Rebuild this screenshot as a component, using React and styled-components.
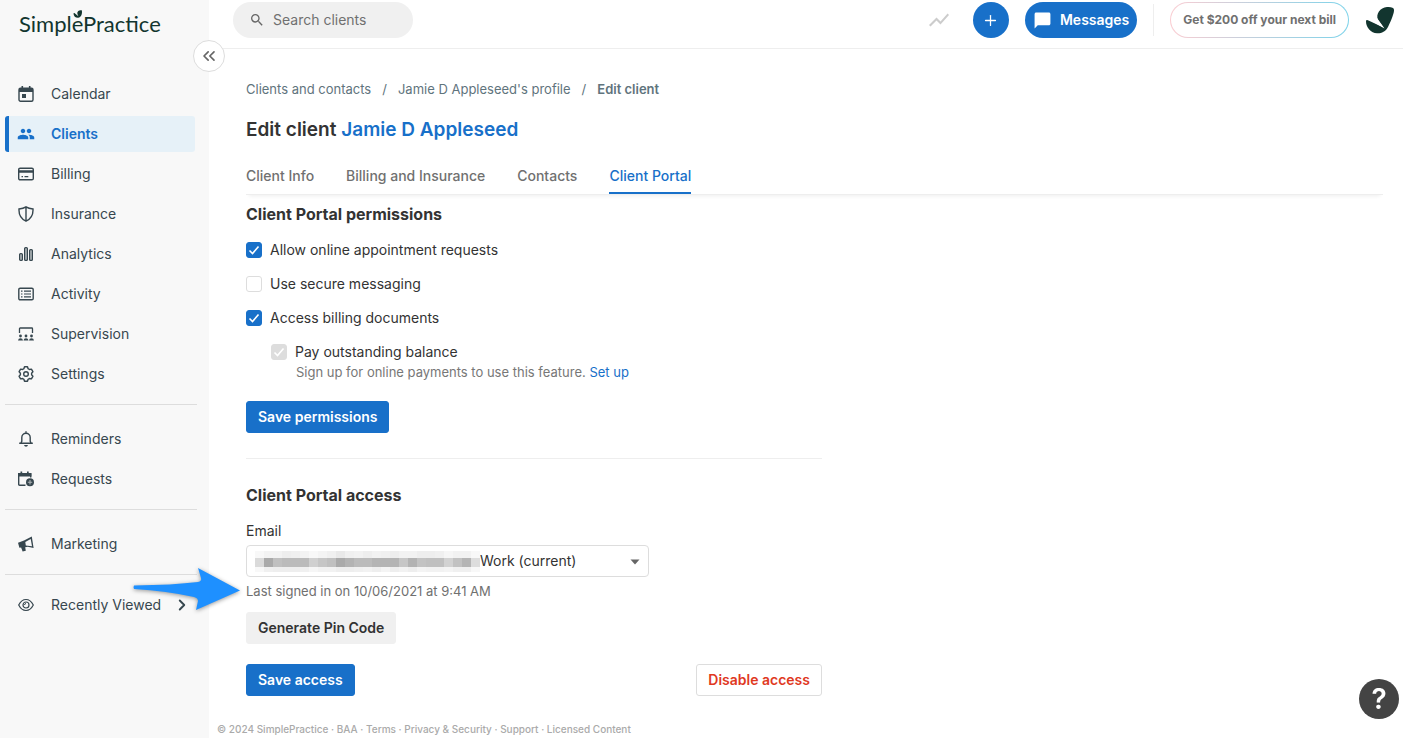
import React from "react";
import styled, { createGlobalStyle } from "styled-components";
import { MdSearch, MdPeople, MdChatBubble, MdShowChart } from "react-icons/md";
import { LuChevronsLeft, LuChevronRight, LuPlus } from "react-icons/lu";

const BLUE = "#1870c9";

const MOSAIC = [
  "f8f8f8 f3f3f3 f3f3f3 eee f0f0f0 f3f3f3 f8f8f8 f4f4f4 f0f0f0 e9e9e9 f0f0f0 f2f2f2 eee f2f2f2 f0f0f0 eee f2f2f2 f2f2f2 eee eee f0f0f0 f6f6f6 f2f2f2 f2f2f2 f8f8f8",
  "dadada aaa c0c0c0 bbb bbb bbb d0d0d0 c6c6c6 c0c0c0 aaa b3b3b3 bbb bbb b4b4b4 b4b4b4 b4b4b4 c6c6c6 b3b3b3 c3c3c3 c0c0c0 c0c0c0 d2d2d2 c2c2c2 b5b5b5 ddd",
  "f8f8f8 f0f0f0 eee eee eee f0f0f0 f6f6f6 f2f2f2 f2f2f2 eee eee f0f0f0 f2f2f2 eee f4f4f4 eee f2f2f2 eee f4f4f4 f2f2f2 f2f2f2 f4f4f4 f0f0f0 f0f0f0 f8f8f8",
].map((row) => row.split(" "));

const CalendarIcon = () => (
  <svg width="16" height="16" viewBox="0 0 16 16" fill="none">
    <rect x="1" y="2.2" width="14" height="13" rx="1.5" stroke="currentColor" strokeWidth="1.4" />
    <path d="M1 2h14v4H1zM3.5 0h1.6v3H3.5zM10.9 0h1.6v3h-1.6zM4 8h4v4H4z" fill="currentColor" />
  </svg>
);

const BillingIcon = () => (
  <svg width="16" height="14" viewBox="0 0 16 14" fill="none">
    <rect x=".7" y="1.2" width="14.6" height="11.6" rx="1.4" stroke="currentColor" strokeWidth="1.4" />
    <path d="M1 3.3h14v2.4H1zM3.5 9H5v1.3H3.5zM6.500 9h3.800v1.300H6.500z" fill="currentColor" />
  </svg>
);

const ShieldIcon = () => (
  <svg width="16" height="16" viewBox="0 0 16 16" fill="none" stroke="currentColor" strokeWidth="1.4">
    <path d="M8 .8c2 1.300 4.200 1.900 7 2.200.3 5.700-1.900 9.900-7 12.200C2.900 12.900.7 8.700 1 3 3.800 2.700 6 2.100 8 .8zM8 1v14" />
  </svg>
);

const AnalyticsIcon = () => (
  <svg width="16" height="16" viewBox="0 0 16 16" stroke="currentColor" strokeWidth="1.2" fill="#b3b9bb">
    <rect x="1.6" y="7.6" width="2.8" height="6.8" rx="1" />
    <rect x="6.6" y="1.6" width="2.8" height="12.8" rx="1" />
    <rect x="11.6" y="3.6" width="2.8" height="10.8" rx="1" />
  </svg>
);

const ActivityIcon = () => (
  <svg width="16" height="14" viewBox="0 0 16 14" fill="none" stroke="currentColor" strokeWidth="1.4">
    <rect x=".8" y="1.2" width="14.4" height="11.6" rx="1.3" />
    <path d="M3 4.200h1.500M3 7h1.500M3 9.800h1.500M6 4.200h7M6 7h7M6 9.800h7" strokeWidth="1.2" />
  </svg>
);

const SupervisionIcon = () => (
  <svg width="16" height="14" viewBox="0 0 16 14" fill="currentColor">
    <path d="M1.500 6V1.700Q1.500 1 2.200 1h11.600q.7 0 .7.700V6" fill="none" stroke="currentColor" strokeWidth="1.3" />
    <circle cx="2.500" cy="9" r="1.4" />
    <circle cx="8" cy="9" r="1.4" />
    <circle cx="13.500" cy="9" r="1.4" />
    <path d="M0 13.500q.3-2.300 2.500-2.300T5 13.500zM5.500 13.500q.3-2.300 2.500-2.300t2.500 2.300zM11 13.500q.3-2.300 2.500-2.300t2.500 2.300z" />
  </svg>
);

const GearIcon = () => (
  <svg width="16" height="16" viewBox="0 0 16 16" fill="none" stroke="currentColor" strokeWidth="1.4" strokeLinejoin="round">
    <path d="M6.500.8h3l.6 1.900 1.300.8 2-.4 1.500 2.600L13.600 7.200v1.600l1.300 1.500-1.500 2.600-2-.4-1.300.8-.6 1.900h-3l-.6-1.900-1.300-.8-2 .4-1.500-2.600 1.300-1.500V7.200L1.100 5.700l1.500-2.600 2 .4 1.300-.8z" />
    <circle cx="8" cy="8" r="2.3" />
  </svg>
);

const BellIcon = () => (
  <svg width="16" height="16" viewBox="0 0 16 16" fill="none" stroke="currentColor" strokeWidth="1.4">
    <path d="M1.200 12.300h13.600M2.800 12.300l1-2V6.500a4.200 4.200 0 0 1 8.400 0v3.800l1 2M8 .3v1.800" />
    <path d="M6 14h4q-.4 1.700-2 1.700T6 14z" fill="currentColor" stroke="none" />
  </svg>
);

const RequestsIcon = () => (
  <svg width="16" height="16" viewBox="0 0 16 16" fill="none">
    <path d="M7.500 14.300H1.700q-1 0-1-1V3h12v3.500" stroke="currentColor" strokeWidth="1.4" />
    <path d="M0 2h13.400v3.500H0zM2.500.5h1.700v2H2.500zM9 .5h1.700v2H9z" fill="currentColor" />
    <circle cx="12" cy="11.2" r="4" fill="currentColor" />
    <path d="M12 9v4.400M9.800 11.200h4.400" stroke="#aeb4b6" strokeWidth="1.1" />
  </svg>
);

const MarketingIcon = () => (
  <svg width="16" height="16" viewBox="0 0 16 16">
    <path d="M13.800.5 15.600 12l-5.800-1.300-2.600.5.600 3.500-3.200.7-1.500-3.800-1.700.2L0 6.800l6-2.200zM12.700 3 7.300 6l.5 3.500 6.200.8z" fill="currentColor" fillRule="evenodd" />
  </svg>
);

const EyeIcon = () => (
  <svg width="16" height="14" viewBox="0 0 16 14" fill="none" stroke="currentColor" strokeWidth="1.2">
    <path d="M.7 7Q3.500 1.500 8 1.500T15.300 7Q12.500 12.500 8 12.500T.7 7z" />
    <circle cx="8" cy="7" r="3" />
    <path d="M6.500 7Q6.500 5.500 8 5.500" strokeWidth="1" />
  </svg>
);

const Leaf = () => (
  <svg width="30" height="28" viewBox="0 0 30 28" fill="#12352f">
    <path d="M18.500 21.500 13 14C10.500 8 15 1.500 22 1c4-.3 7 .5 7 2.800.3 3-2.500 10-6 17.200-2.500 5-7 6.500-11 6.200C6 27 1 21.500 1 15.500c.2-2.200 1.500-1.600 3-.7z" />
    <path d="m5 14 14.500 8.500L12 12z" fill="#fff" />
  </svg>
);

const Sprout = () => (
  <svg width="10" height="9" viewBox="0 0 10 9" fill="#12352f">
    <path d="M4.500 4.200C3.800 1.800 5.500.2 8.800.3c.7 3-.3 7-3.600 7.500C2.500 8 .7 6 .5 3.700c0-1 .8-.8 1.200-.5l3.700 3z" />
  </svg>
);

const mainLinks = [
  { label: "Calendar", icon: <CalendarIcon /> },
  { label: "Clients", icon: <MdPeople size={18} />, active: true },
  { label: "Billing", icon: <BillingIcon /> },
  { label: "Insurance", icon: <ShieldIcon /> },
  { label: "Analytics", icon: <AnalyticsIcon /> },
  { label: "Activity", icon: <ActivityIcon /> },
  { label: "Supervision", icon: <SupervisionIcon /> },
  { label: "Settings", icon: <GearIcon /> },
];

const noticeLinks = [
  { label: "Reminders", icon: <BellIcon /> },
  { label: "Requests", icon: <RequestsIcon /> },
];

const footerLinks = ["BAA", "Terms", "Privacy & Security", "Support", "Licensed Content"];

const NavGroup = ({ links }) => (
  <Nav>
    {links.map(({ label, icon, active }) => (
      <NavItem href="#" key={label} $active={active}>
        <NavIcon>{icon}</NavIcon>
        {label}
      </NavItem>
    ))}
  </Nav>
);

const App = () => {
  return (
    <Page>
      <GlobalStyle />
      <Sidebar>
        <Logo href="#">
          SimplePractice
          <LogoLeaf>
            <Sprout />
          </LogoLeaf>
        </Logo>
        <Collapse aria-label="Collapse menu">
          <LuChevronsLeft size={20} />
        </Collapse>
        <NavGroup links={mainLinks} />
        <Rule />
        <NavGroup links={noticeLinks} />
        <Rule />
        <NavGroup links={[{ label: "Marketing", icon: <MarketingIcon /> }]} />
        <Rule />
        <Recent>
          <NavIcon>
            <EyeIcon />
          </NavIcon>
          Recently Viewed
          <RecentChevron size={18} strokeWidth={2.5} />
        </Recent>
      </Sidebar>

      <Main>
        <Header>
          <Search>
            <MdSearch size={16} />
            <SearchInput aria-label="Search clients" placeholder="Search clients" />
          </Search>
          <HeaderActions>
            <ChartButton aria-label="Activity trends">
              <MdShowChart size={24} />
            </ChartButton>
            <AddButton aria-label="Add">
              <LuPlus size={17} strokeWidth={1.8} />
            </AddButton>
            <Messages>
              <MdChatBubble size={19} />
              Messages
            </Messages>
            <Divider />
            <Offer>Get $200 off your next bill</Offer>
            <Profile aria-label="Account">
              <Leaf />
            </Profile>
          </HeaderActions>
        </Header>

        <Content>
          <Breadcrumbs aria-label="Breadcrumb">
            <a href="#">Clients and contacts</a>
            <span>/</span>
            <a href="#">Jamie D Appleseed's profile</a>
            <span>/</span>
            <b>Edit client</b>
          </Breadcrumbs>
          <Title>
            Edit client <a href="#">Jamie D Appleseed</a>
          </Title>
          <Tabs>
            <Tab href="#">Client Info</Tab>
            <Tab href="#">Billing and Insurance</Tab>
            <Tab href="#">Contacts</Tab>
            <Tab href="#" $active>
              Client Portal
            </Tab>
          </Tabs>

          <Permissions>
            <SectionTitle>Client Portal permissions</SectionTitle>
            <CheckRow>
              <Checkbox defaultChecked />
              Allow online appointment requests
            </CheckRow>
            <CheckRow>
              <Checkbox />
              Use secure messaging
            </CheckRow>
            <CheckRow>
              <Checkbox defaultChecked />
              Access billing documents
            </CheckRow>
            <SubOption>
              <CheckRow>
                <Checkbox defaultChecked disabled />
                Pay outstanding balance
              </CheckRow>
              <Hint>
                Sign up for online payments to use this feature. <a href="#">Set up</a>
              </Hint>
            </SubOption>
            <Button>Save permissions</Button>
          </Permissions>

          <Access>
            <SectionTitle>Client Portal access</SectionTitle>
            <Label htmlFor="email">Email</Label>
            <SelectBox>
              <Select id="email">
                <option>Work (current)</option>
              </Select>
              <Mosaic width="225" height="21" viewBox="0 0 225 21" aria-hidden="true">
                {MOSAIC.map((row, y) =>
                  row.map((color, x) => (
                    <rect key={`${x}-${y}`} x={x * 9} y={[0, 7, 16][y]} width="9" height={[7, 9, 5][y]} fill={`#${color}`} />
                  ))
                )}
              </Mosaic>
              <Caret width="10" height="6" viewBox="0 0 10 6">
                <path d="M.5.5h9L5 5.500z" fill="#666" />
              </Caret>
              <Arrow width="108" height="46" viewBox="0 0 108 46">
                <path d="M1 18.500Q0 20 1 22q33 2 60 8 4 1 4 4l-2 9 44-19.500L65 1l3 10q1 3-3 4-25 3-64 3.500z" fill="#1e90ff" />
              </Arrow>
            </SelectBox>
            <SignedIn>Last signed in on 10/06/2021 at 9:41 AM</SignedIn>
            <Button $kind="grey">Generate Pin Code</Button>
            <Actions>
              <Button>Save access</Button>
              <Button $kind="danger">Disable access</Button>
            </Actions>
          </Access>
        </Content>

        <Footer>
          © 2024 SimplePractice
          {footerLinks.map((link) => (
            <React.Fragment key={link}>
              {" · "}
              <a href="#">{link}</a>
            </React.Fragment>
          ))}
        </Footer>
      </Main>

      <Help aria-label="Help">?</Help>
    </Page>
  );
};

export default App;

const Checkbox = (props) => (
  <CheckHolder>
    <CheckInput type="checkbox" {...props} />
    <svg width="16" height="16" viewBox="0 0 16 16" fill="none" stroke="#fff" strokeWidth="1.6">
      <path d="m3.500 8.500 3 3L12.500 4.500" />
    </svg>
  </CheckHolder>
);

const GlobalStyle = createGlobalStyle`
  * {
    box-sizing: border-box;
  }

  body {
    margin: 0;
    background: #fff;
    color: #333;
    font-family: Inter, "Liberation Sans", sans-serif;
    font-size: 14px;
    line-height: 20px;
  }

  a {
    color: inherit;
    text-decoration: none;
  }

  button, input, select {
    font-family: inherit;
    font-size: inherit;
    line-height: inherit;
  }

  button {
    cursor: pointer;
  }

  svg {
    display: block;
    flex: none;
  }
`;

const Page = styled.div`
  display: flex;
  min-height: 100vh;
`;

const Sidebar = styled.aside`
  position: relative;
  flex: none;
  width: 209px;
  padding: 8px 12px 0 5px;
  background: #f8f8f8;
  color: #37474f;
`;

const Logo = styled.a`
  position: relative;
  display: block;
  width: max-content;
  margin: 0 0 36px 14px;
  color: #12352f;
  font-family: Lato, sans-serif;
  font-size: 22px;
  line-height: 32px;
`;

const LogoLeaf = styled.span`
  position: absolute;
  top: 2px;
  left: 54px;
`;

const Collapse = styled.button`
  position: absolute;
  top: 40px;
  right: -16px;
  display: flex;
  align-items: center;
  justify-content: center;
  width: 32px;
  height: 32px;
  padding: 0;
  border: 1px solid #ddd;
  border-radius: 50%;
  background: #fff;
  color: #666;
`;

const Nav = styled.nav`
  display: flex;
  flex-direction: column;
  gap: 4px;
`;

const NavItem = styled.a`
  display: flex;
  align-items: center;
  height: 36px;
  margin-right: 2px;
  padding-left: 9px;
  border-left: 4px solid ${(p) => (p.$active ? BLUE : "transparent")};
  border-radius: 3px;
  background: ${(p) => (p.$active ? "#e6f1f8" : "none")};
  color: ${(p) => (p.$active ? BLUE : "inherit")};
  font-weight: ${(p) => (p.$active ? 600 : 400)};
`;

const NavIcon = styled.span`
  display: flex;
  justify-content: center;
  width: 16px;
  margin-right: 17px;
`;

const Rule = styled.hr`
  margin: 12px 0 16px;
  border: 0;
  border-top: 1px solid #ddd;
`;

const Recent = styled.button`
  display: flex;
  align-items: center;
  width: 100%;
  height: 28px;
  padding: 0 6px 0 13px;
  border: 0;
  background: none;
  color: inherit;
`;

const RecentChevron = styled(LuChevronRight)`
  margin-left: auto;
`;

const Main = styled.div`
  flex: 1;
  display: flex;
  flex-direction: column;
  min-width: 0;
`;

const Header = styled.header`
  display: flex;
  justify-content: space-between;
  height: 49px;
  padding: 2px 8px 0 24px;
  border-bottom: 1px solid #eee;
`;

const Search = styled.label`
  display: flex;
  align-items: center;
  gap: 8px;
  width: 180px;
  height: 36px;
  padding: 0 16px;
  border-radius: 18px;
  background: #f0f0f0;
  color: #666;
`;

const SearchInput = styled.input`
  min-width: 0;
  padding: 0;
  border: 0;
  outline: 0;
  background: none;

  &::placeholder {
    color: #707070;
  }
`;

const HeaderActions = styled.div`
  display: flex;
  height: 36px;
  align-items: center;
`;

const ChartButton = styled.button`
  margin-right: 22px;
  padding: 0;
  border: 0;
  background: none;
  color: #ccc;
`;

const AddButton = styled.button`
  display: flex;
  align-items: center;
  justify-content: center;
  width: 36px;
  height: 36px;
  margin-right: 16px;
  padding: 0;
  border: 0;
  border-radius: 50%;
  background: ${BLUE};
  color: #fff;
`;

const Messages = styled.button`
  display: flex;
  align-items: center;
  gap: 8px;
  height: 36px;
  padding: 0 8px;
  border: 0;
  border-radius: 18px;
  background: ${BLUE};
  color: #fff;
  font-weight: 600;
`;

const Divider = styled.span`
  width: 1px;
  height: 32px;
  margin: 0 16px;
  background: #eee;
`;

const Offer = styled.button`
  height: 36px;
  padding: 0 12px;
  border: 1px solid transparent;
  border-radius: 18px;
  background:
    linear-gradient(#fff, #fff) padding-box,
    linear-gradient(90deg, #fbcdd2, #7dd3ea) border-box;
  color: #707070;
  font-size: 12px;
  font-weight: 700;
`;

const Profile = styled.button`
  margin-left: 16px;
  padding: 0;
  border: 0;
  background: none;
`;

const Content = styled.main`
  padding: 30px 20px 0 37px;
`;

const Breadcrumbs = styled.nav`
  display: flex;
  gap: 11px;
  color: #5f747d;
  font-size: 13px;

  b {
    font-weight: 600;
  }
`;

const Title = styled.h1`
  margin: 17px 0 20px;
  font-size: 19px;
  font-weight: 600;
  line-height: 28px;

  a {
    color: ${BLUE};
  }
`;

const Tabs = styled.nav`
  display: flex;
  gap: 32px;
  border-bottom: 1px solid #eee;
  box-shadow: 0 4px 4px -3px #eee;
`;

const Tab = styled.a`
  padding: 2px 0 6px;
  border-bottom: 2px solid ${(p) => (p.$active ? BLUE : "transparent")};
  color: ${(p) => (p.$active ? BLUE : "#707070")};
  font-weight: 500;
`;

const Permissions = styled.section`
  max-width: 576px;
  padding: 7px 0 25px;
  border-bottom: 1px solid #eee;
`;

const Access = styled.section`
  max-width: 576px;
  padding-top: 24px;
`;

const SectionTitle = styled.h2`
  margin: 0 0 14px;
  font-size: 16px;
  font-weight: 700;
  line-height: 24px;
`;

const CheckRow = styled.label`
  display: flex;
  align-items: center;
  gap: 8px;
  width: max-content;
  margin-bottom: 14px;
`;

const CheckHolder = styled.span`
  display: grid;

  > * {
    grid-area: 1 / 1;
  }

  svg {
    pointer-events: none;
  }
`;

const CheckInput = styled.input`
  appearance: none;
  width: 16px;
  height: 16px;
  margin: 0;
  border: 1px solid #ddd;
  border-radius: 3px;
  background: #fff;

  &:checked {
    border-color: ${BLUE};
    background: ${BLUE};
  }

  &:disabled {
    border-color: #ddd;
    background: #ddd;
  }
`;

const SubOption = styled.div`
  margin: 0 0 19px 25px;

  label {
    margin: 0;
  }
`;

const Hint = styled.p`
  margin: 0 0 0 25px;
  color: #777;
  font-size: 13px;

  a {
    color: ${BLUE};
  }
`;

const buttonKinds = {
  primary: `background: ${BLUE}; color: #fff; border-color: ${BLUE};`,
  grey: `background: #f0f0f0; color: #333; border-color: #f0f0f0;`,
  danger: `background: #fff; color: #e0391f; border-color: #ddd;`,
};

const Button = styled.button`
  height: 32px;
  padding: 0 11px;
  border: 1px solid;
  border-radius: 3px;
  font-weight: 600;
  ${(p) => buttonKinds[p.$kind || "primary"]}
`;

const Label = styled.label`
  display: block;
  width: max-content;
  margin-bottom: 4px;
`;

const SelectBox = styled.div`
  position: relative;
  max-width: 403px;
`;

const Select = styled.select`
  display: block;
  appearance: none;
  width: 100%;
  height: 32px;
  padding: 0 28px 0 233px;
  border: 1px solid #ddd;
  border-radius: 4px;
  background: #fff;
  color: #333;
`;

const Mosaic = styled.svg`
  position: absolute;
  top: 6px;
  left: 9px;
  pointer-events: none;
`;

const Caret = styled.svg`
  position: absolute;
  top: 14px;
  right: 9px;
  pointer-events: none;
`;

const Arrow = styled.svg`
  position: absolute;
  top: 22px;
  left: -113px;
  filter: drop-shadow(0 1px 2px rgba(0, 0, 0, 0.4));
  pointer-events: none;
`;

const SignedIn = styled.p`
  margin: 4px 0 11px;
  color: #707070;
  font-size: 13px;
`;

const Actions = styled.div`
  display: flex;
  justify-content: space-between;
  margin-top: 20px;
`;

const Footer = styled.footer`
  margin-top: auto;
  padding: 0 8px;
  color: #aaa;
  font-size: 10px;
  font-weight: 500;
  line-height: 18px;
`;

const Help = styled.button`
  position: fixed;
  right: 4px;
  bottom: 19px;
  width: 40px;
  height: 40px;
  padding: 0;
  border: 0;
  border-radius: 50%;
  background: #444;
  color: #fff;
  font-size: 28px;
  font-weight: 600;
  line-height: 40px;
`;
